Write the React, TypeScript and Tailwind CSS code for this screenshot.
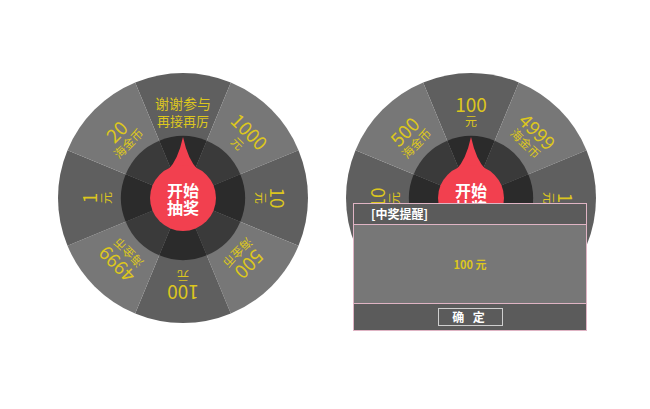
import React from "react";

type Seg = { l1: string; l2: string; s1: number; s2: number };

const SEGS: Seg[] = [
  { l1: "谢谢参与", l2: "再接再厉", s1: 14, s2: 13 },
  { l1: "1000", l2: "元", s1: 19, s2: 12 },
  { l1: "10", l2: "元", s1: 19, s2: 12 },
  { l1: "500", l2: "海金币", s1: 19, s2: 12 },
  { l1: "100", l2: "元", s1: 19, s2: 12 },
  { l1: "4999", l2: "海金币", s1: 19, s2: 12 },
  { l1: "1", l2: "元", s1: 19, s2: 12 },
  { l1: "20", l2: "海金币", s1: 19, s2: 12 },
];

const C = 125;
const pt = (r: number, deg: number) => {
  const t = (deg * Math.PI) / 180;
  return [C + r * Math.sin(t), C - r * Math.cos(t)];
};
const wedge = (r: number, a: number) => {
  const [x1, y1] = pt(r, a - 22.5);
  const [x2, y2] = pt(r, a + 22.5);
  return `M${C},${C} L${x1},${y1} A${r},${r} 0 0 1 ${x2},${y2} Z`;
};

const FONT = "'Noto Sans CJK SC', 'Liberation Sans', sans-serif";

function Wheel({ offset }: { offset: number }) {
  return (
    <svg width="250" height="250" viewBox="0 0 250 250" className="block">
      {SEGS.map((_, i) => (
        <path key={"o" + i} d={wedge(125, i * 45)} fill={i % 2 === 0 ? "#5f5f5f" : "#777777"} />
      ))}
      {SEGS.map((_, i) => {
        const seg = SEGS[(i + offset) % 8];
        return (
          <g key={"t" + i} transform={`rotate(${i * 45} ${C} ${C})`} fontFamily={FONT} fill="#dcc61e" textAnchor="middle">
            <text x={C} y={C - 95} fontSize={seg.s1} dominantBaseline="central">
              {seg.l1}
            </text>
            <text x={C} y={C - 78} fontSize={seg.s2} dominantBaseline="central">
              {seg.l2}
            </text>
          </g>
        );
      })}
      {SEGS.map((_, i) => (
        <path key={"i" + i} d={wedge(62, i * 45)} fill={i % 2 === 0 ? "#2b2b2b" : "#3a3a3a"} />
      ))}
      <path
        d={`M${C - 15},${C - 28} Q${C - 5},${C - 38} ${C},${C - 61} Q${C + 5},${C - 38} ${C + 15},${C - 28} Z`}
        fill="#f2404f"
      />
      <circle cx={C} cy={C} r={33} fill="#f2404f" />
      <g fontFamily={FONT} fill="#ffffff" fontWeight="bold" fontSize="16" textAnchor="middle">
        <text x={C} y={C - 8} dominantBaseline="central">开始</text>
        <text x={C} y={C + 9} dominantBaseline="central">抽奖</text>
      </g>
    </svg>
  );
}

export default function App() {
  return (
    <div
      className="w-[650px] h-[409px] bg-white flex items-start pl-[58px] pt-[73px] gap-[38px] overflow-hidden"
      style={{ fontFamily: FONT }}
    >
      <Wheel offset={0} />
      <div className="relative w-[250px] h-[250px]">
        <Wheel offset={4} />
        <div className="absolute left-[7px] top-[130px] w-[234px] h-[128px] flex flex-col border border-[#dfb4c4] bg-[#5b5b5b]">
          <div className="h-[20px] flex items-center pl-[17px] text-white text-[12px] font-bold leading-none">
            [中奖提醒]
          </div>
          <div className="h-[80px] bg-[#777777] border-y border-[#dfb4c4] flex items-center justify-center text-[11px] text-[#dcc61e] font-bold">
            100 元
          </div>
          <div className="flex-1 flex items-center justify-center">
            <div className="w-[65px] h-[18px] border border-[#cfcfcf] flex items-center justify-center text-white text-[12px] font-bold leading-none tracking-[3px]">
              确 定
            </div>
          </div>
        </div>
      </div>
    </div>
  );
}
